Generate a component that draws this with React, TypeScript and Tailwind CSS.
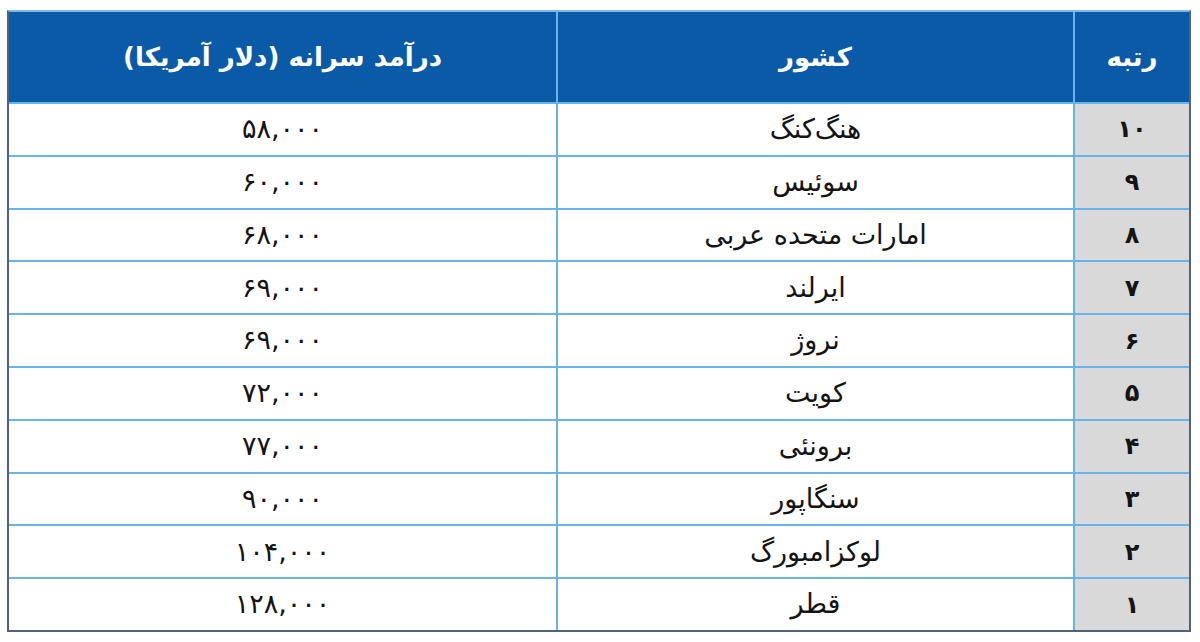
import React from "react";

const rows: [string, string, string][] = [
  ["۱۰", "هنگ‌کنگ", "۵۸,۰۰۰"],
  ["۹", "سوئیس", "۶۰,۰۰۰"],
  ["۸", "امارات متحده عربی", "۶۸,۰۰۰"],
  ["۷", "ایرلند", "۶۹,۰۰۰"],
  ["۶", "نروژ", "۶۹,۰۰۰"],
  ["۵", "کویت", "۷۲,۰۰۰"],
  ["۴", "برونئی", "۷۷,۰۰۰"],
  ["۳", "سنگاپور", "۹۰,۰۰۰"],
  ["۲", "لوکزامبورگ", "۱۰۴,۰۰۰"],
  ["۱", "قطر", "۱۲۸,۰۰۰"],
];

export default function App() {
  return (
    <div className="w-[1200px] h-[642px] bg-white pt-[10px] pl-[7px]" style={{ fontFamily: '"DejaVu Sans", "Noto Sans", sans-serif' }}>
      <div
        dir="rtl"
        className="w-[1184px] h-[622px] border-2 border-[#4f6479] border-t-[#7cbbe6] bg-[#68b3e8] grid grid-cols-[114px_515px_1fr] grid-rows-[90px_repeat(10,minmax(0,1fr))] gap-[2px]"
      >
        <div className="bg-[#0b5aa8] flex items-center justify-center text-white font-bold text-[26px]">رتبه</div>
        <div className="bg-[#0b5aa8] flex items-center justify-center text-white font-bold text-[26px]">کشور</div>
        <div className="bg-[#0b5aa8] flex items-center justify-center text-white font-bold text-[26px]">درآمد سرانه (دلار آمریکا)</div>
        {rows.map(([r, c, v]) => (
          <React.Fragment key={r}>
            <div className="bg-[#d9d9d9] flex items-center justify-center text-[#141414] font-bold text-[24px]">{r}</div>
            <div className="bg-white flex items-center justify-center text-[#141414] text-[27px]">{c}</div>
            <div className="bg-white flex items-center justify-center text-[#141414] text-[27px]">{v}</div>
          </React.Fragment>
        ))}
      </div>
    </div>
  );
}
